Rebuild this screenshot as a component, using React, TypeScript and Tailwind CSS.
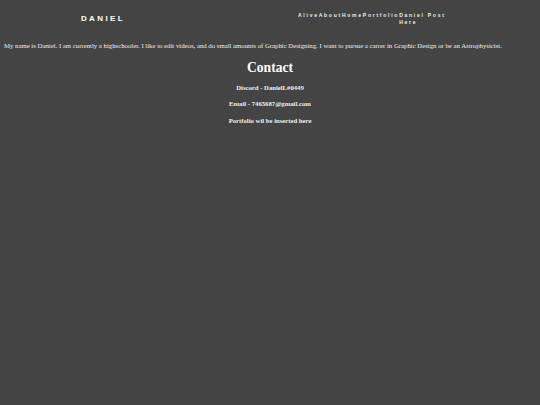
import React from 'react';

const navItems = ['Alive', 'About', 'Home', 'Portfolio'];

export default function App() {
  return (
    <div className="min-h-screen bg-[#444444] text-[#eeeeee] font-['Liberation_Serif',serif]">
      <header className="flex items-center h-[38px] font-['Liberation_Sans',Arial,sans-serif] font-bold">
        <div className="w-[206px] text-center text-[8px] tracking-[2.4px] text-white">DANIEL</div>
        <nav className="ml-[92px]">
          <ul className="flex text-[5px] tracking-[1.75px] leading-[7px]">
            {navItems.map((item) => (
              <li key={item}>{item}</li>
            ))}
            <li>
              Daniel Post
              <br />
              Here
            </li>
          </ul>
        </nav>
      </header>

      <p className="px-1 pt-[4px] text-[6.75px] leading-[8px]">
        My name is Daniel. I am currently a highschooler. I like to edit videos, and do small amounts of Graphic Designing. I want to pursue a carrer in Graphic Design or be an Astrophysicist.
      </p>

      <section className="text-center font-bold">
        <h1 className="mt-[10px] text-[13.6px] leading-[16px] text-white">Contact</h1>
        <p className="mt-[8px] text-[6.7px] leading-[8px]">Discord - DanielL#0449</p>
        <p className="mt-[8px] text-[6.7px] leading-[8px]">Email - 7465687@gmail.com</p>
        <p className="mt-[9px] text-[6.7px] leading-[8px]">Portfolio wil be inserted here</p>
      </section>
    </div>
  );
}
